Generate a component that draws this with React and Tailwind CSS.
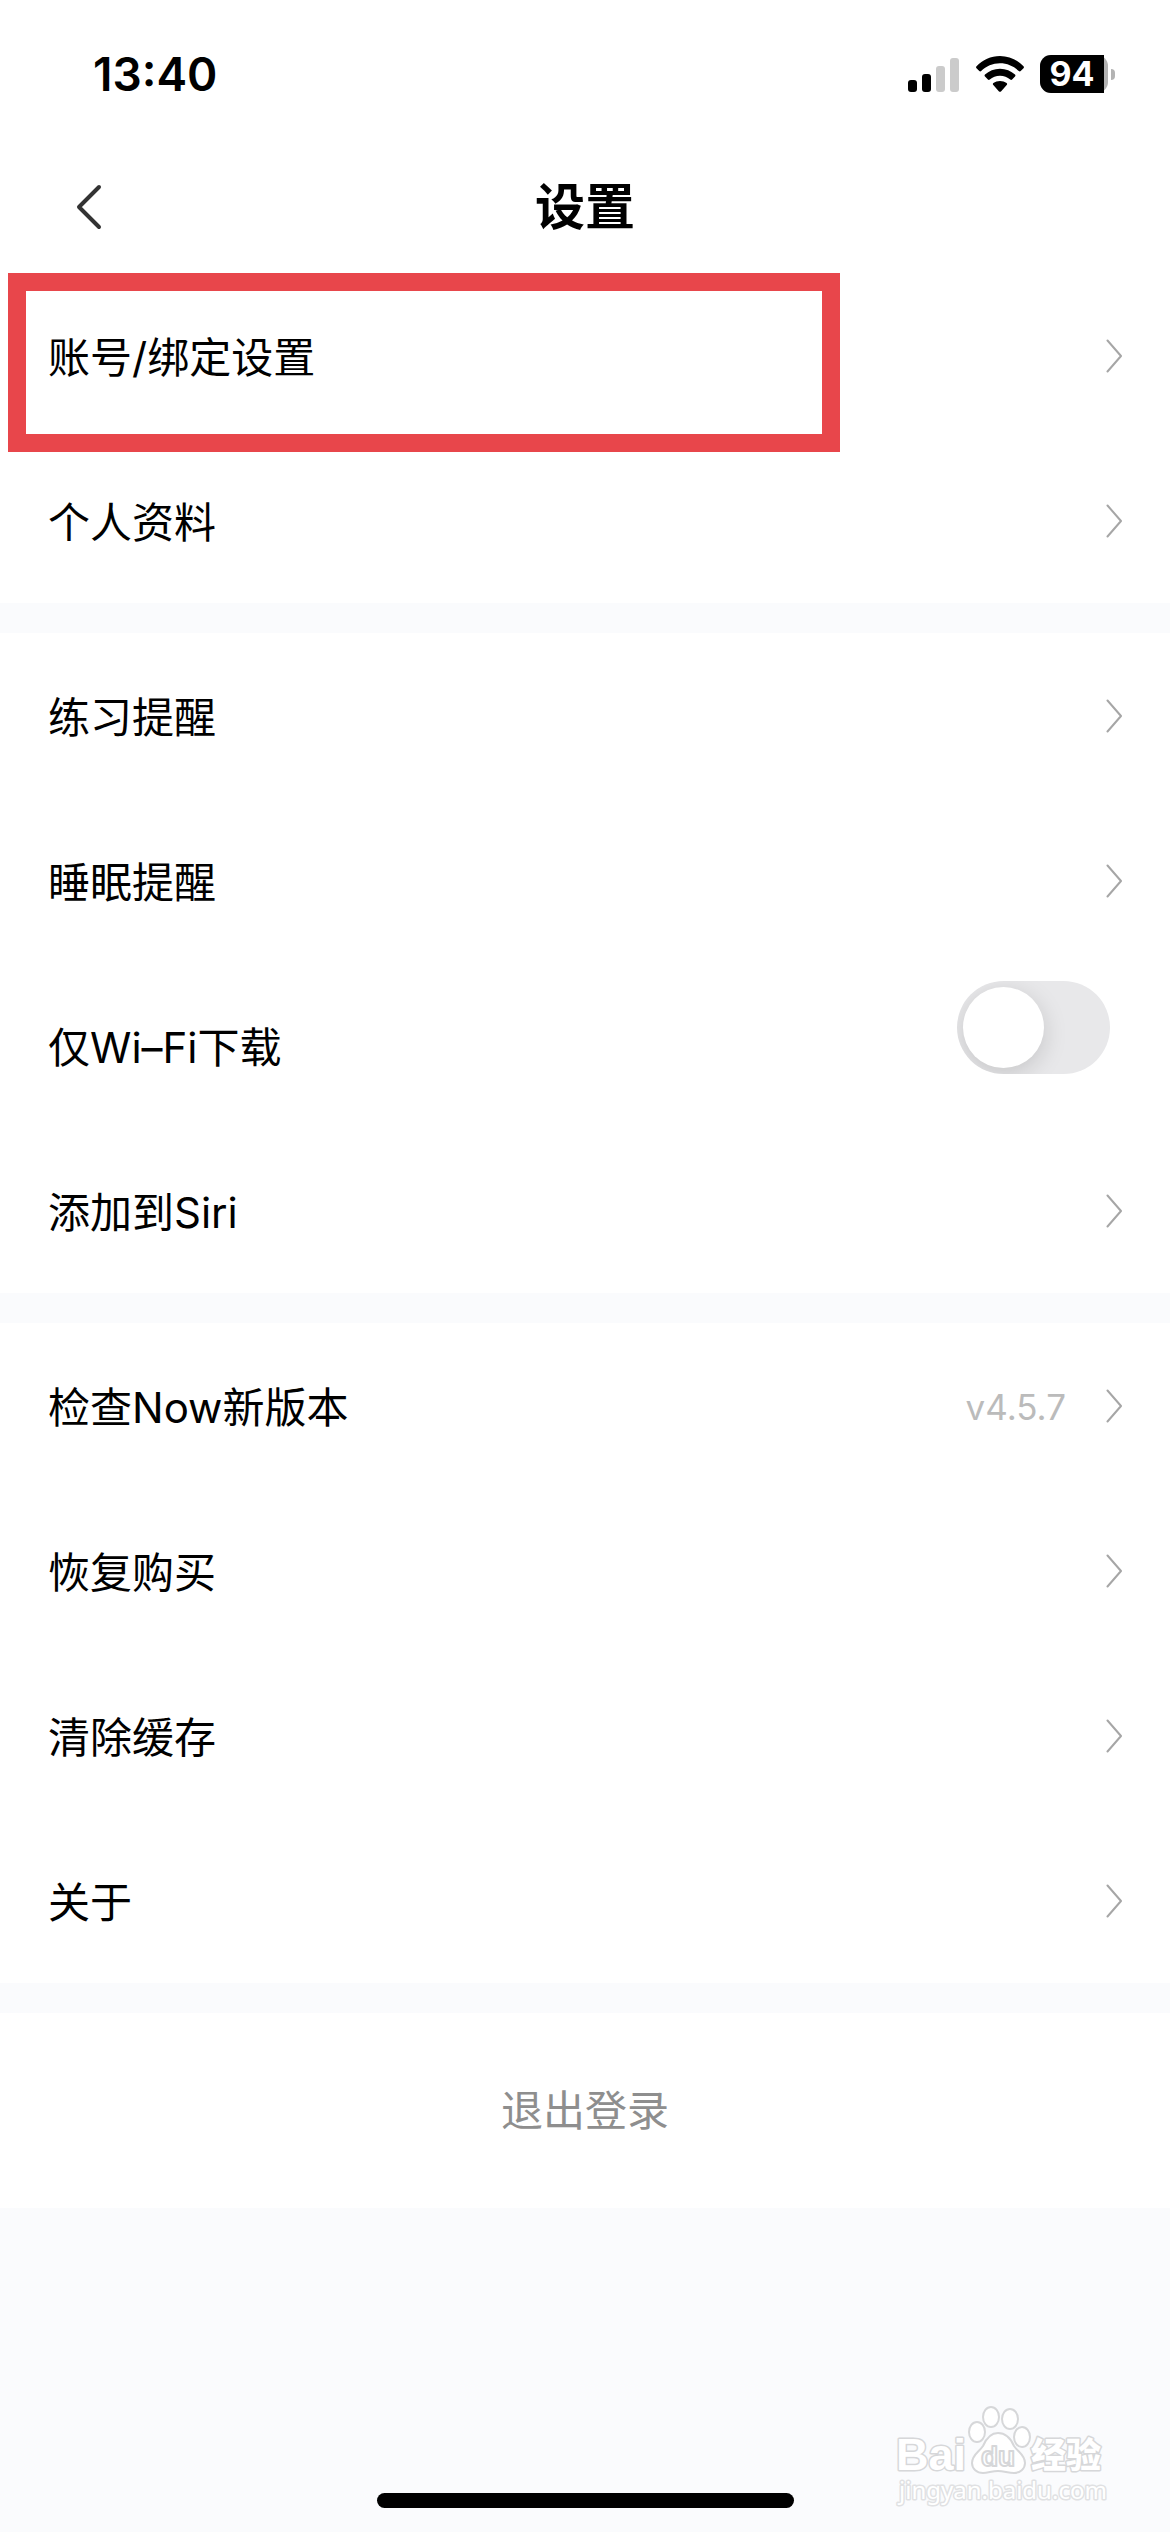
import React, { useState } from "react";

const SECTIONS = [
  [{ label: "账号/绑定设置", highlighted: true }, { label: "个人资料" }],
  [
    { label: "练习提醒" },
    { label: "睡眠提醒" },
    { label: "仅Wi–Fi下载", toggle: true },
    { label: "添加到Siri" },
  ],
  [
    { label: "检查Now新版本", value: "v4.5.7" },
    { label: "恢复购买" },
    { label: "清除缓存" },
    { label: "关于" },
  ],
];

function SignalIcon() {
  return (
    <svg width="52" height="36" viewBox="0 0 52 36" aria-hidden="true">
      <rect x="0" y="24" width="9" height="12" rx="3" fill="#000" />
      <rect x="14" y="18" width="9" height="18" rx="3" fill="#000" />
      <rect x="28" y="10" width="9" height="26" rx="3" fill="#cbcbcb" />
      <rect x="42" y="2" width="9" height="34" rx="3" fill="#cbcbcb" />
    </svg>
  );
}

function WifiIcon() {
  return (
    <svg width="48" height="36" viewBox="0 0 48 36" aria-hidden="true">
      <path d="M.5 10.2C6.6 3.900 14.900 0 24 0s17.400 3.900 23.500 10.200c.6.6.6 1.400 0 2l-2.800 2.900c-.5.5-1.300.5-1.900 0C37.900 10.300 31.300 7.300 24 7.300S10.100 10.300 5.200 15.100c-.6.5-1.400.5-1.900 0L.5 12.200c-.6-.6-.6-1.400 0-2Z" />
      <path d="M9 18.600C12.900 14.900 18.200 12.700 24 12.700s11.100 2.200 15 5.900c.6.6.6 1.400 0 2l-2.900 2.900c-.5.5-1.300.5-1.900 0C31.500 21.100 27.900 19.700 24 19.700s-7.500 1.400-10.200 3.800c-.6.5-1.400.5-1.900 0L9 20.600c-.6-.6-.6-1.400 0-2Z" />
      <path d="M17.400 27.100C19.200 25.800 21.500 25 24 25s4.800.8 6.600 2.100c.7.5.7 1.400.1 2l-5.700 6.300c-.6.6-1.400.6-2 0l-5.700-6.300c-.6-.6-.6-1.500.1-2Z" />
    </svg>
  );
}

function Battery() {
  return (
    <div className="flex items-center gap-[3px]">
      <div className="flex h-[38px] w-[68px] rounded-[11px] bg-[#b3b3b3]">
        <div className="flex w-16 items-center justify-center rounded-l-[11px] bg-black text-[34px] leading-[38px] font-bold text-white">
          94
        </div>
      </div>
      <div className="h-[11px] w-1 rounded-r-full bg-[#b3b3b3]" />
    </div>
  );
}

function Chevron() {
  return (
    <svg
      width="16"
      height="34"
      viewBox="0 0 16 34"
      fill="none"
      stroke="#a6a6a6"
      strokeWidth="2"
      strokeLinecap="round"
      strokeLinejoin="round"
      aria-hidden="true"
    >
      <path d="M1.500 1.500 15 17 1.500 32.500" />
    </svg>
  );
}

function ToggleRow({ label }) {
  const [on, setOn] = useState(false);
  return (
    <label className="flex h-[165px] items-center justify-between pr-[60px] pl-12">
      <span className="pt-1">{label}</span>
      <span className="mb-9 flex">
        <input
          type="checkbox"
          role="switch"
          checked={on}
          onChange={() => setOn(!on)}
          className="peer sr-only"
        />
        <span className="flex h-[93px] w-[153px] overflow-hidden rounded-full bg-[#e8e8ea] p-1.5 peer-checked:justify-end peer-checked:bg-green-500">
          <span className="size-[81px] rounded-full bg-white shadow-[0_6px_24px_rgba(0,0,0,0.15)]" />
        </span>
      </span>
    </label>
  );
}

function LinkRow({ label, value, highlighted }) {
  return (
    <button
      type="button"
      className="relative flex h-[165px] w-full items-center justify-between px-12 text-left"
    >
      <span className="pt-1">{label}</span>
      <span className="flex items-center gap-10">
        {value && <span className="pt-0.5 text-[35px] text-[#bbbbbb]">{value}</span>}
        <Chevron />
      </span>
      {highlighted && (
        <span className="absolute top-0 left-2 h-[179px] w-[832px] border-[18px] border-[#e8464b]" />
      )}
    </button>
  );
}

function Watermark() {
  return (
    <svg
      className="absolute right-[54px] bottom-5"
      width="222"
      height="108"
      viewBox="894 2404 222 108"
      fill="#fff"
      stroke="#d6d7d9"
      strokeWidth="2"
      strokeLinejoin="round"
      aria-label="Baidu经验"
    >
      <g strokeWidth="3" style={{ paintOrder: "stroke" }}>
        <text x="896" y="2470" fontSize="45" fontWeight="700" fontFamily="Liberation Sans">
          Bai
        </text>
        <text x="1031" y="2468" fontSize="35" fontWeight="900" fontFamily="Noto Sans CJK SC">
          经验
        </text>
        <text x="899" y="2499" fontSize="24" fontFamily="Noto Sans" stroke="#e0e1e3">
          jingyan.baidu.com
        </text>
      </g>
      <ellipse cx="977" cy="2432" rx="8" ry="10" />
      <ellipse cx="991" cy="2417" rx="8" ry="10" />
      <ellipse cx="1010" cy="2419" rx="8" ry="10" />
      <ellipse cx="1022" cy="2437" rx="8" ry="10" />
      <path d="M998 2433c8 0 13 6 16 13 4 6 11 9 11 17 0 6-5 10-11 10-6 0-10-2-16-2s-10 2-15 2c-6 0-11-4-11-10 0-8 7-11 11-17 3-7 7-13 15-13Z" />
      <text x="981" y="2466" fontSize="28" fontFamily="Liberation Sans" fontWeight="700">
        du
      </text>
    </svg>
  );
}

export default function App() {
  return (
    <div className="relative flex min-h-screen flex-col bg-[#fafbfd] font-['Inter','Noto_Sans_CJK_SC',sans-serif] text-[42px] leading-[60px] text-black">
      <header className="bg-white">
        <div className="flex h-[148px] items-center justify-between pr-[55px] pl-[93px]">
          <time className="text-[46px] font-semibold">13:40</time>
          <div className="flex items-center gap-4">
            <SignalIcon />
            <WifiIcon />
            <Battery />
          </div>
        </div>
        <div className="grid h-[125px] grid-cols-[1fr_auto_1fr] items-center px-[75px] pb-2">
          <button type="button" aria-label="返回" className="justify-self-start">
            <svg
              width="28"
              height="48"
              viewBox="0 0 28 48"
              fill="none"
              stroke="#333"
              strokeWidth="4"
              strokeLinecap="round"
              strokeLinejoin="round"
            >
              <path d="M24 4 4 24l20 20" />
            </svg>
          </button>
          <h1 className="text-[50px] font-bold">设置</h1>
        </div>
      </header>

      <main className="flex flex-col gap-[30px]">
        {SECTIONS.map((rows) => (
          <section key={rows[0].label} className="bg-white">
            {rows.map((row) =>
              row.toggle ? (
                <ToggleRow key={row.label} label={row.label} />
              ) : (
                <LinkRow key={row.label} {...row} />
              )
            )}
          </section>
        ))}
        <button type="button" className="h-[195px] w-full bg-white text-[#8e8e8e]">
          退出登录
        </button>
      </main>

      <footer className="mt-auto flex justify-center pb-6">
        <div className="h-[15px] w-[417px] rounded-full bg-black" />
      </footer>
      <Watermark />
    </div>
  );
}
